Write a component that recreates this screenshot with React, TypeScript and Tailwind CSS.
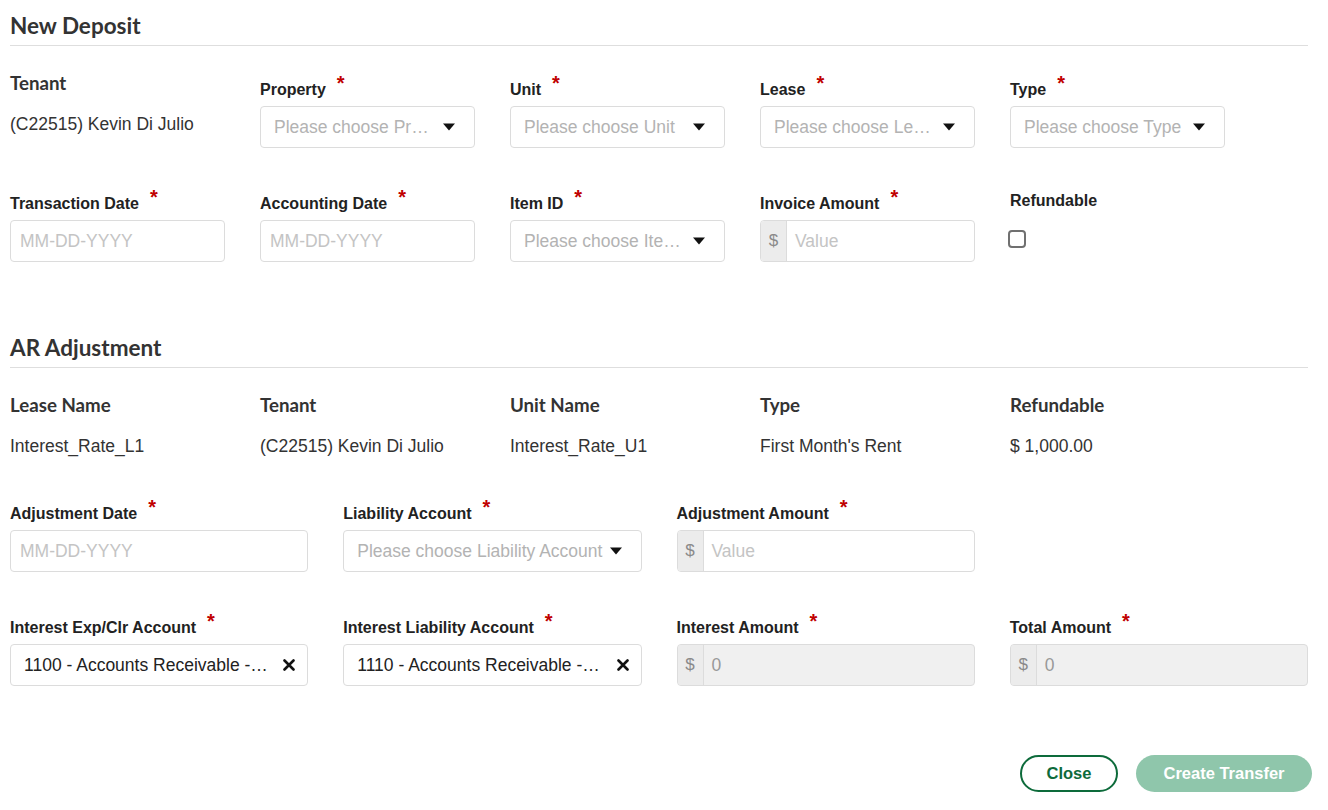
import React from 'react';

const ARIAL = "font-['Liberation_Sans',Arial,sans-serif]";
const LATO = "font-['Lato','Liberation_Sans',sans-serif]";

function Caret() {
  return (
    <svg width="12" height="8" viewBox="0 0 12 8" className="shrink-0">
      <path d="M0 0.5 L12 0.5 L6 7.5 Z" fill="#111" />
    </svg>
  );
}

function ClearIcon() {
  return (
    <svg width="12" height="12" viewBox="0 0 12 12" className="shrink-0">
      <path d="M1.5 1.5 L10.5 10.5 M10.5 1.5 L1.5 10.5" stroke="#111" strokeWidth="2.6" strokeLinecap="round" />
    </svg>
  );
}

function Label({ text, required = true }: { text: string; required?: boolean }) {
  return (
    <div className="h-[20px] flex items-center text-[16px] font-bold leading-[20px] text-[#222] whitespace-nowrap">
      {text}
      {required && (
        <span className="ml-[11px] -mt-[14px] text-[20px] leading-none text-[#c00000]">*</span>
      )}
    </div>
  );
}

function Select({ placeholder }: { placeholder: string }) {
  return (
    <div className="mt-[6px] h-[42px] rounded-[4px] border border-[#dcdcdc] bg-white flex items-center pl-[13px] pr-[19px] gap-[5px]">
      <span className="flex-1 min-w-0 truncate text-[17.5px] text-[#b3b3b3]">{placeholder}</span>
      <Caret />
    </div>
  );
}

function Chosen({ value }: { value: string }) {
  return (
    <div className="mt-[6px] h-[42px] rounded-[4px] border border-[#dcdcdc] bg-white flex items-center pl-[13px] pr-[12px] gap-[12px]">
      <span className="flex-1 min-w-0 truncate text-[17.5px] text-[#222]">{value}</span>
      <ClearIcon />
    </div>
  );
}

function DateInput() {
  return (
    <div className="mt-[6px] h-[42px] rounded-[4px] border border-[#dcdcdc] bg-white flex items-center pl-[9px]">
      <span className="text-[17.5px] text-[#c4c4c4]">MM-DD-YYYY</span>
    </div>
  );
}

function Money({ value, disabled = false }: { value: string; disabled?: boolean }) {
  return (
    <div
      className={[
        'mt-[6px] h-[42px] rounded-[4px] border border-[#dcdcdc] flex items-stretch overflow-hidden',
        disabled ? 'bg-[#f0f0f0]' : 'bg-white',
      ].join(' ')}
    >
      <span className="w-[26px] shrink-0 bg-[#ececec] border-r border-[#dcdcdc] flex items-center justify-center text-[17px] text-[#8a8a8a]">
        $
      </span>
      <span className={['flex items-center pl-[8px] text-[17.5px]', disabled ? 'text-[#999]' : 'text-[#c4c4c4]'].join(' ')}>
        {value}
      </span>
    </div>
  );
}

function SectionTitle({ title }: { title: string }) {
  return (
    <div className={`${LATO} border-b border-[#dedede] pt-[12px] pb-[5px] text-[22.5px] leading-[28px] font-bold text-[#333]`}>
      {title}
    </div>
  );
}

function Info({ label, value }: { label: string; value: string }) {
  return (
    <div>
      <div className={`${LATO} text-[18.7px] leading-[24px] font-bold text-[#333]`}>{label}</div>
      <div className="mt-[17px] text-[17.5px] leading-[24px] text-[#333] whitespace-nowrap">{value}</div>
    </div>
  );
}

export default function App() {
  return (
    <div className={`${ARIAL} w-[1328px] h-[810px] bg-white pl-[10px] pr-[20px] overflow-hidden`}>
      <SectionTitle title="New Deposit" />

      <div className="mt-[25px] grid grid-cols-[repeat(5,215px)] gap-x-[35px] items-start">
        <Info label="Tenant" value="(C22515) Kevin Di Julio" />
        <div className="pt-[9px]">
          <Label text="Property" />
          <Select placeholder="Please choose Property" />
        </div>
        <div className="pt-[9px]">
          <Label text="Unit" />
          <Select placeholder="Please choose Unit" />
        </div>
        <div className="pt-[9px]">
          <Label text="Lease" />
          <Select placeholder="Please choose Lease" />
        </div>
        <div className="pt-[9px]">
          <Label text="Type" />
          <Select placeholder="Please choose Type" />
        </div>
      </div>

      <div className="mt-[46px] grid grid-cols-[repeat(5,215px)] gap-x-[35px] items-start">
        <div>
          <Label text="Transaction Date" />
          <DateInput />
        </div>
        <div>
          <Label text="Accounting Date" />
          <DateInput />
        </div>
        <div>
          <Label text="Item ID" />
          <Select placeholder="Please choose Item ID" />
        </div>
        <div>
          <Label text="Invoice Amount" />
          <Money value="Value" />
        </div>
        <div className="-mt-[3px]">
          <Label text="Refundable" required={false} />
          <div className="-ml-[2px] mt-[19px] w-[18px] h-[18px] rounded-[4px] border-2 border-[#707070] bg-white" />
        </div>
      </div>

      <div className="mt-[60px]">
        <SectionTitle title="AR Adjustment" />
      </div>

      <div className="mt-[25px] grid grid-cols-[repeat(5,215px)] gap-x-[35px] items-start">
        <Info label="Lease Name" value="Interest_Rate_L1" />
        <Info label="Tenant" value="(C22515) Kevin Di Julio" />
        <Info label="Unit Name" value="Interest_Rate_U1" />
        <Info label="Type" value="First Month's Rent" />
        <Info label="Refundable" value="$ 1,000.00" />
      </div>

      <div className="mt-[46px] grid grid-cols-4 gap-x-[35px] items-start">
        <div>
          <Label text="Adjustment Date" />
          <DateInput />
        </div>
        <div>
          <Label text="Liability Account" />
          <Select placeholder="Please choose Liability Account" />
        </div>
        <div>
          <Label text="Adjustment Amount" />
          <Money value="Value" />
        </div>
        <div />
      </div>

      <div className="mt-[46px] grid grid-cols-4 gap-x-[35px] items-start">
        <div>
          <Label text="Interest Exp/Clr Account" />
          <Chosen value="1100 - Accounts Receivable - Interest" />
        </div>
        <div>
          <Label text="Interest Liability Account" />
          <Chosen value="1110 - Accounts Receivable - Liability" />
        </div>
        <div>
          <Label text="Interest Amount" />
          <Money value="0" disabled />
        </div>
        <div>
          <Label text="Total Amount" />
          <Money value="0" disabled />
        </div>
      </div>

      <div className="mt-[69px] -mr-[4px] flex justify-end gap-[18px]">
        <button className="w-[98px] h-[37px] rounded-full border-2 border-[#0d6b3b] bg-white text-[16.5px] font-bold text-[#0d6b3b]">
          Close
        </button>
        <button className="w-[176px] h-[37px] rounded-full bg-[#8fc6ab] text-[16.5px] font-bold text-white">
          Create Transfer
        </button>
      </div>
    </div>
  );
}
